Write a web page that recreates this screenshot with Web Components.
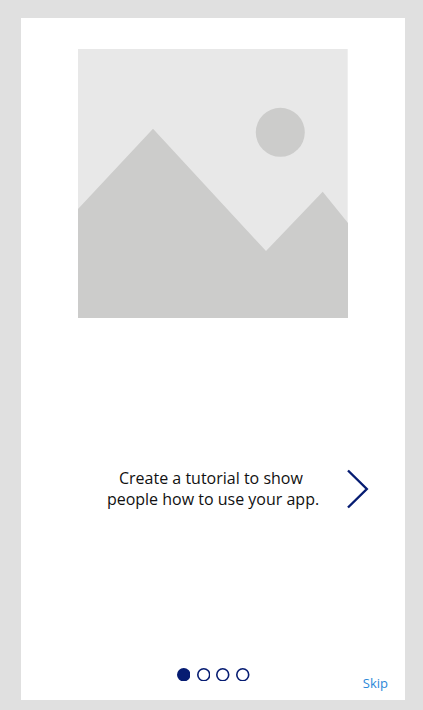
<!DOCTYPE html>
<html>
<head>
<meta charset="utf-8">
<title>Tutorial</title>
<style>
  html, body { margin: 0; height: 100%; background: #e0e0e0; }
  body { font-family: 'Open Sans', sans-serif; overflow: hidden; }
</style>
</head>
<body>
<tutorial-screen>
  <placeholder-image></placeholder-image>
  <tutorial-step>Create a tutorial to show&nbsp;<br>people how to use your app.</tutorial-step>
  <step-dots slot="dots" count="4" active="0"></step-dots>
  <skip-link slot="skip">Skip</skip-link>
</tutorial-screen>

<script>
class TutorialScreen extends HTMLElement {
  constructor() {
    super();
    const root = this.attachShadow( {mode: 'open'} );
    root.innerHTML = `
      <style>
      :host {
        background: #ffffff;
        box-sizing: border-box;
        display: flex;
        flex-direction: column;
        height: 682px;
        margin: 18px 0 0 21px;
        padding: 31px 0 0 0;
        width: 384px;
      }

      .body {
        display: flex;
        flex-direction: column;
        flex-grow: 1;
      }

      footer {
        display: grid;
        grid-template-columns: 1fr auto 1fr;
        height: 36px;
      }

      .skip {
        display: flex;
        justify-content: flex-end;
      }
      </style>
      <div class="body"><slot></slot></div>
      <footer>
        <span></span>
        <slot name="dots"></slot>
        <div class="skip"><slot name="skip"></slot></div>
      </footer>
    `;
  }
}

class PlaceholderImage extends HTMLElement {
  constructor() {
    super();
    const root = this.attachShadow( {mode: 'open'} );
    root.innerHTML = `
      <style>
      :host {
        align-self: center;
        display: block;
        height: 269px;
        width: 270px;
      }

      svg {
        display: block;
      }
      </style>
      <svg width="270" height="269" viewBox="0 0 270 269">
        <rect width="269.7" height="269" fill="#e8e8e8"/>
        <circle cx="202.3" cy="83.3" r="24.5" fill="#cccccb"/>
        <path d="M0 160 L75 79.7 L188 202 L244.7 142.7 L270 174 V269 H0 Z" fill="#cccccb"/>
      </svg>
    `;
  }
}

class TutorialStep extends HTMLElement {
  constructor() {
    super();
    const root = this.attachShadow( {mode: 'open'} );
    root.innerHTML = `
      <style>
      :host {
        align-items: center;
        display: flex;
        margin: 150px 0 0 0;
        padding: 0 36px 0 58px;
      }

      p {
        color: #111111;
        flex-grow: 1;
        font-size: 16px;
        line-height: 21px;
        margin: 0;
        text-align: center;
      }

      svg {
        display: block;
        flex-shrink: 0;
      }
      </style>
      <p><slot></slot></p>
      <svg width="22" height="40" viewBox="0 0 22 40">
        <path d="M1 1.5 L19.8 20 L1 38.5" fill="none" stroke="#061c72" stroke-width="2.4"/>
      </svg>
    `;
  }
}

class StepDots extends HTMLElement {
  constructor() {
    super();
    this._shadowRoot = this.attachShadow( {mode: 'open'} );
  }

  connectedCallback() {
    const count = parseInt( this.getAttribute( 'count' ) );
    const active = parseInt( this.getAttribute( 'active' ) );
    let dots = '';

    for( let d = 0; d < count; d++ ) {
      dots += `<svg width="13.5" height="13.5" viewBox="0 0 13.5 13.5"><circle cx="6.75" cy="6.75" r="5.95" stroke="#061c72" stroke-width="1.6" fill="${d === active ? '#061c72' : 'none'}"/></svg>`;
    }

    this._shadowRoot.innerHTML = `
      <style>
      :host {
        align-items: flex-start;
        display: flex;
        gap: 6.3px;
        padding: 3.6px 0 0 0.6px;
      }

      svg {
        display: block;
      }
      </style>
      ${dots}
    `;
  }
}

class SkipLink extends HTMLElement {
  constructor() {
    super();
    const root = this.attachShadow( {mode: 'open'} );
    root.innerHTML = `
      <style>
      :host {
        color: #2b88d8;
        display: block;
        font-size: 13px;
        line-height: 18px;
        padding: 10px 17px 0 0;
      }
      </style>
      <slot></slot>
    `;
  }
}

window.customElements.define( 'tutorial-screen', TutorialScreen );
window.customElements.define( 'placeholder-image', PlaceholderImage );
window.customElements.define( 'tutorial-step', TutorialStep );
window.customElements.define( 'step-dots', StepDots );
window.customElements.define( 'skip-link', SkipLink );
</script>
</body>
</html>
